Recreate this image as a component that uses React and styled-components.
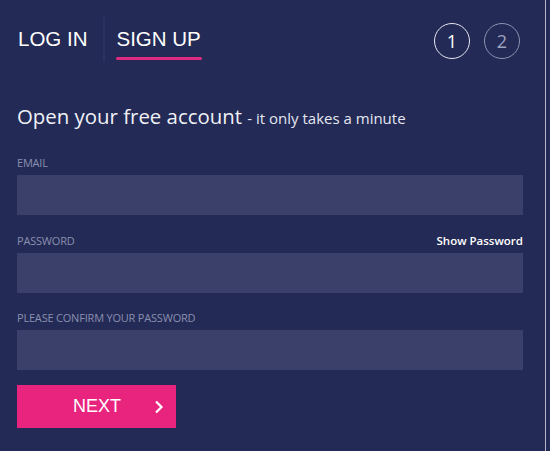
import React from "react";
import styled, { createGlobalStyle } from "styled-components";

const Global = createGlobalStyle`
  html, body {
    margin: 0;
    padding: 0;
    background: #232a55;
  }
`;

const Panel = styled.div`
  width: 546px;
  height: 451px;
  box-sizing: border-box;
  background: #232a55;
  border-right: 1px solid #b9b3c9;
  padding: 0 22px 0 17px;
  font-family: "Open Sans", "Noto Sans", sans-serif;
`;

const Header = styled.div`
  display: flex;
  align-items: center;
  justify-content: space-between;
  height: 80px;
  padding-top: 1px;
  box-sizing: border-box;
`;

const Tabs = styled.div`
  display: flex;
  align-items: stretch;
  height: 45px;
  margin-top: -3px;
`;

const Tab = styled.div`
  font-family: "Liberation Sans", Arial, sans-serif;
  font-size: 20.5px;
  color: #ffffff;
  display: flex;
  align-items: center;
  padding: ${(p) => (p.$first ? "0 15px 0 1px" : "0 0 0 12px")};
  border-left: ${(p) => (p.$first ? "none" : "2px solid #2b3160")};
  span {
    position: relative;
  }
  span::after {
    content: "";
    display: ${(p) => (p.$active ? "block" : "none")};
    position: absolute;
    left: -1px;
    right: -1px;
    bottom: -9px;
    height: 3px;
    border-radius: 2px;
    background: #df2a82;
  }
`;

const Steps = styled.div`
  display: flex;
  gap: 14px;
  margin-right: 3px;
`;

const Step = styled.div`
  width: 34px;
  height: 34px;
  border-radius: 50%;
  border: 1.5px solid ${(p) => (p.$active ? "#e6e7f0" : "#8e93b2")};
  color: ${(p) => (p.$active ? "#ffffff" : "#9ea3c0")};
  display: flex;
  align-items: center;
  justify-content: center;
  font-size: 18px;
`;

const Title = styled.h1`
  margin: 21px 0 0 0;
  font-weight: 400;
  font-size: 20.4px;
  color: #f0f1f7;
  line-height: 30px;
  small {
    font-size: 15px;
    color: #e4e6f0;
  }
`;

const Field = styled.div`
  margin-top: ${(p) => p.$top}px;
`;

const LabelRow = styled.div`
  display: flex;
  justify-content: space-between;
  align-items: flex-start;
  height: 20px;
  line-height: 15px;
`;

const Label = styled.label`
  font-size: 11px;
  color: #8a8fb0;
  text-transform: uppercase;
  letter-spacing: -0.2px;
`;

const Toggle = styled.span`
  font-size: 11.5px;
  font-weight: 600;
  color: #ffffff;
`;

const Input = styled.div`
  height: 40px;
  background: #3a4069;
`;

const Button = styled.button`
  margin-top: 15px;
  width: 159px;
  height: 43px;
  border: none;
  background: #e8247f;
  color: #ffffff;
  font-family: "Liberation Sans", Arial, sans-serif;
  font-size: 18px;
  display: flex;
  align-items: center;
  padding: 0 12px 0 56px;
  box-sizing: border-box;
  justify-content: space-between;
  cursor: pointer;
`;

const Chevron = () => (
  <svg width="10" height="14" viewBox="0 0 10 14" fill="none">
    <path d="M2 1.5 L7.5 7 L2 12.5" stroke="#fff" strokeWidth="2.2" />
  </svg>
);

export default function App() {
  return (
    <>
      <Global />
      <Panel>
        <Header>
          <Tabs>
            <Tab $first>
              <span>LOG IN</span>
            </Tab>
            <Tab $active>
              <span>SIGN UP</span>
            </Tab>
          </Tabs>
          <Steps>
            <Step $active>1</Step>
            <Step>2</Step>
          </Steps>
        </Header>
        <Title>
          Open your free account <small>- it only takes a minute</small>
        </Title>
        <Field $top={22}>
          <LabelRow>
            <Label>Email</Label>
          </LabelRow>
          <Input />
        </Field>
        <Field $top={18}>
          <LabelRow>
            <Label>Password</Label>
            <Toggle>Show Password</Toggle>
          </LabelRow>
          <Input />
        </Field>
        <Field $top={17}>
          <LabelRow>
            <Label>Please confirm your password</Label>
          </LabelRow>
          <Input />
        </Field>
        <Button>
          NEXT
          <Chevron />
        </Button>
      </Panel>
    </>
  );
}
